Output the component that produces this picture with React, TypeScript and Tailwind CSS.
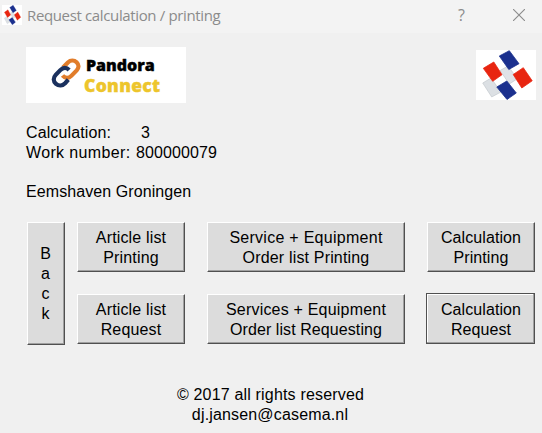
import type { ReactNode } from "react";

function BlocksLogo({ className }: { className: string }) {
  return (
    <svg viewBox="0 0 60 50" preserveAspectRatio="none" className={className}>
      <rect width="60" height="50" fill="#fff" />
      <g stroke="#b5bac0" strokeWidth="0.5">
        <path d="M6.7 33 15 28 25 42 15.7 47Z" fill="#dce0e4" />
        <path d="M24 20.5 32 16 41.5 28.7 33.3 34Z" fill="#dfe2e7" />
      </g>
      <g strokeWidth="0.8" strokeLinejoin="round">
        <path d="M23.3 6 33.3 .7 43 13.7 32.8 19.5Z" fill="#1b308e" stroke="#1b308e" />
        <path d="M7.3 18.3 17.8 12 26 24.7 16.7 31.3Z" fill="#e82510" stroke="#e82510" />
        <path d="M37.2 24.5 47.3 17.7 56.2 30.8 45.8 38Z" fill="#e82510" stroke="#e82510" />
        <path d="M20.8 37 30.8 31 40.3 43 31 49.5Z" fill="#1b308e" stroke="#1b308e" />
      </g>
    </svg>
  );
}

function TitleBar() {
  return (
    <header className="flex h-[33px] items-center bg-[#f3f3f3] text-[#8b8b8b]">
      <BlocksLogo className="mb-[3px] ml-0.5 h-5 w-5" />
      <h1 className="mb-[3px] ml-[5px] w-[400px] whitespace-nowrap font-['Open_Sans',sans-serif] text-[15px] leading-5 tracking-[-0.36px]">
        Request calculation / printing
      </h1>
      <span className="mb-[3px] ml-[31px] w-3 font-['Open_Sans',sans-serif] text-[16px] leading-5">?</span>
      <svg viewBox="0 0 12 12" className="mb-[3px] ml-[43px] h-3 w-3" fill="none" stroke="currentColor" strokeWidth="1.1">
        <path d="M0 0 12 12M12 0 0 12" />
      </svg>
    </header>
  );
}

function PandoraLogo() {
  return (
    <div className="flex h-14 w-40 bg-white pl-[25px] pt-[11px]">
      <svg viewBox="0 0 30 32" className="h-8 w-[30px]" fill="none" strokeWidth="4.2">
        <path d="m12 9.5 4.9-5c2.8-2.7 6.4-2.3 8.7-.2 2.6 2.5 2.4 5.6.1 8.1l-5.4 5.5c-2.6 2.7-6.4 2.5-8.8-.4" stroke="#e17d2b" />
        <path d="m17.3 21.7-3.2 3.5c-2.6 2.7-6.3 3-9.1.6-3-2.6-2.9-6.1-.3-8.9l4.6-4.8c2.9-2.9 6.3-2.9 8.8-.1" stroke="#1b315e" />
      </svg>
      <div className="-mt-[3px] ml-[3px] font-['Open_Sans',sans-serif] font-extrabold leading-[20px]">
        <div className="ml-0.5 text-[16px] text-black [-webkit-text-stroke:0.4px]">Pandora</div>
        <div className="text-[17.5px] tracking-[0.3px] text-[#edc52c] [-webkit-text-stroke:0.4px]">Connect</div>
      </div>
    </div>
  );
}

function Button({ className = "", focused = false, children }: { className?: string; focused?: boolean; children: ReactNode }) {
  return (
    <button
      className={`block border bg-[#dcdcdc] text-center leading-5 ${
        focused
          ? "border-[#505050] shadow-[inset_-1px_-1px_0_#a0a0a0,inset_1px_1px_0_#fff]"
          : "border-b-[#505050] border-l-white border-r-[#505050] border-t-white shadow-[inset_-1px_-1px_0_#a0a0a0]"
      } ${className}`}
    >
      {children}
    </button>
  );
}

export default function App() {
  return (
    <div className="h-[433px] w-[542px] overflow-hidden bg-[#f0f0f0] font-['Liberation_Sans',Arial,sans-serif] text-[16px] leading-5 text-black">
      <TitleBar />
      <main className="pt-[14px]">
        <div className="flex justify-between pl-[26px] pr-[6px]">
          <PandoraLogo />
          <BlocksLogo className="mt-[3px] h-[50px] w-[60px]" />
        </div>
        <section className="ml-[26px] mt-5">
          <div className="flex">
            <span className="w-[115px] tracking-[0.12px]">Calculation:</span>
            <span>3</span>
          </div>
          <div className="flex">
            <span className="w-[110px] whitespace-nowrap tracking-[0.36px]">Work number:</span>
            <span className="tracking-[0.1px]">800000079</span>
          </div>
          <div className="mt-[19px] tracking-[0.08px]">Eemshaven Groningen</div>
        </section>
        <nav className="ml-[27px] mt-5 flex h-[123px]">
          <Button className="h-[123px] w-[38px] pr-px">
            B<br />a<br />c<br />k
          </Button>
          <div className="ml-3 flex flex-col gap-[22px]">
            <Button className="h-[50px] w-[108px] pt-px tracking-[0.16px]">Article list<br />Printing</Button>
            <Button className="h-[50px] w-[108px] pt-px tracking-[0.16px]">Article list<br />Request</Button>
          </div>
          <div className="ml-[22px] flex flex-col gap-[22px]">
            <Button className="h-[50px] w-[198px] pt-px">
              <span className="tracking-[0.27px]">Service + Equipment</span>
              <br />
              <span className="tracking-[0.17px]">Order list Printing</span>
            </Button>
            <Button className="h-[50px] w-[198px] pt-px">
              <span className="tracking-[0.2px]">Services + Equipment</span>
              <br />
              <span className="tracking-[0.08px]">Order list Requesting</span>
            </Button>
          </div>
          <div className="ml-[21px] flex flex-col items-end gap-[21px]">
            <Button className="h-[50px] w-[108px] pt-px tracking-[0.08px]">Calculation<br />Printing</Button>
            <Button focused className="h-[51px] w-[109px] pl-px pt-[3px] tracking-[0.08px]">Calculation<br />Request</Button>
          </div>
        </nav>
        <footer className="mt-10 text-center">
          <p className="-ml-px tracking-[0.18px]">© 2017 all rights reserved</p>
          <p className="-ml-0.5 tracking-[0.16px]">dj.jansen@casema.nl</p>
        </footer>
      </main>
    </div>
  );
}
